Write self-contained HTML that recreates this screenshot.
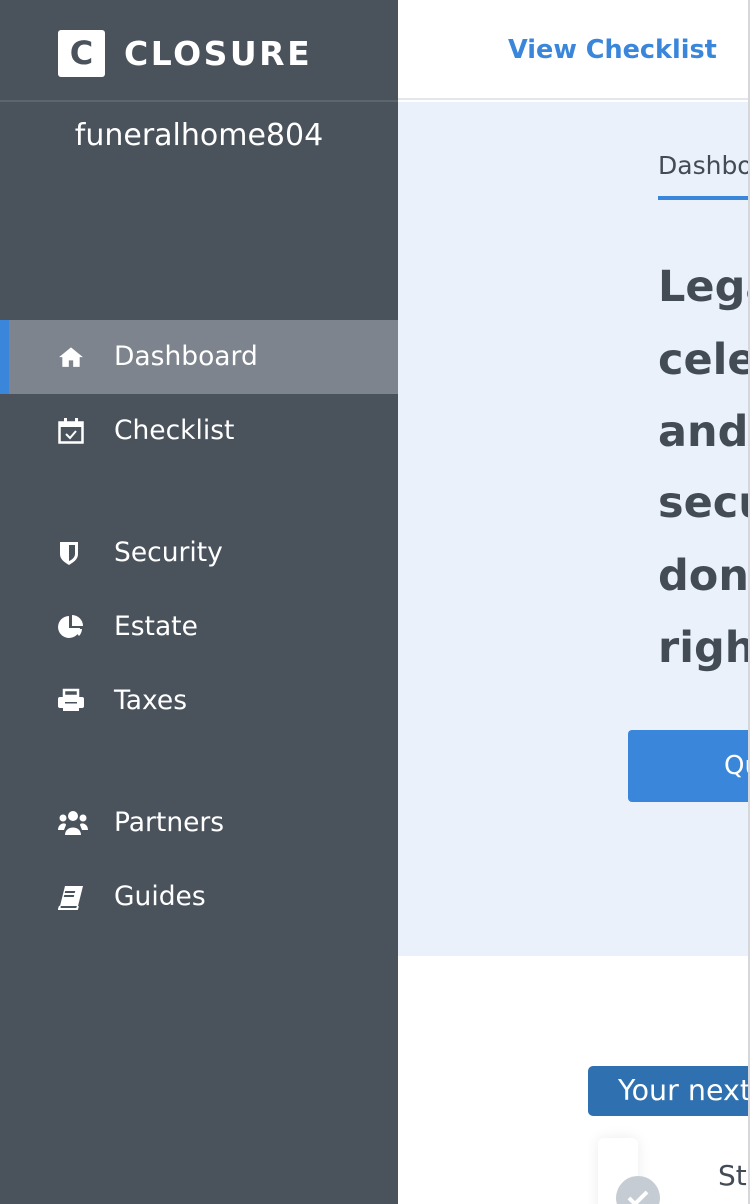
<!DOCTYPE html>
<html><head><meta charset="utf-8"><style>
*{margin:0;padding:0;box-sizing:border-box}
body{width:752px;height:1204px;overflow:hidden;background:#fff;font-family:"DejaVu Sans","Liberation Sans",sans-serif;position:relative}
.sb{position:absolute;left:0;top:0;width:398px;height:1204px;background:#4a525c}
.abs{position:absolute}
.nav{position:absolute;left:0;width:398px;height:74px;color:#fff;font-size:26.5px;line-height:74px}
.nav span{position:absolute;left:114px}
.nav svg{position:absolute;left:58px;top:24px}
.main{position:absolute;left:398px;top:0;width:350px;height:1204px;overflow:hidden}
.h{position:absolute;left:260px;font-weight:bold;font-size:43px;color:#434b55;white-space:nowrap;line-height:72px}
</style></head><body>
<div class="sb">
  <div class="abs" style="left:58px;top:30px;width:47px;height:47px;background:#fff;border-radius:3px"></div>
  <div class="abs" style="left:58px;top:30px;width:47px;height:47px;color:#4a525c;font-weight:bold;font-size:32px;line-height:47px;text-align:center">C</div>
  <div class="abs" style="left:124px;top:30px;height:47px;line-height:47px;color:#fff;font-weight:bold;font-size:33px;letter-spacing:2.5px">CLOSURE</div>
  <div class="abs" style="left:0;top:100px;width:398px;height:2px;background:#5c646e"></div>
  <div class="abs" style="left:0;top:116px;width:398px;text-align:center;color:#fff;font-size:30px;line-height:40px">funeralhome804</div>
  <div class="nav" style="top:320px;background:#7d848d"><div class="abs" style="left:0;top:0;width:9px;height:74px;background:#3a86db"></div>
    <svg width="26" height="24" viewBox="0 0 24 22"><path d="M12 3 L1 12 L4 12 L4 21 L10 21 L10 15 L14 15 L14 21 L20 21 L20 12 L23 12 Z" fill="#fff"/></svg><span>Dashboard</span></div>
  <div class="nav" style="top:394px"><svg width="26" height="26" viewBox="0 0 26 26"><rect x="1.5" y="4.5" width="23" height="20" fill="none" stroke="#fff" stroke-width="2.5"/><rect x="1" y="4" width="24" height="5" fill="#fff"/><rect x="6" y="0" width="3" height="7" fill="#fff"/><rect x="17" y="0" width="3" height="7" fill="#fff"/><path d="M8 16 L12 20 L18 13" fill="none" stroke="#fff" stroke-width="2"/></svg><span>Checklist</span></div>
  <div class="nav" style="top:516px"><svg width="24" height="26" viewBox="0 0 24 26"><path d="M2 2 H20 V14 C20 20 14 23 11 25 C8 23 2 20 2 14 Z" fill="#fff"/><path d="M11 5 H17 V14 C17 17 14 20 11 21 Z" fill="#4a525c"/></svg><span>Security</span></div>
  <div class="nav" style="top:590px"><svg width="26" height="26" viewBox="0 0 26 26"><path d="M11 2 A11 11 0 1 0 22 14 L11 14 Z" fill="#fff"/><path d="M14 1 A11 11 0 0 1 25 12 L14 12 Z" fill="#fff"/><path d="M15 15 L24 15 A11 11 0 0 1 21 22 Z" fill="#fff"/></svg><span>Estate</span></div>
  <div class="nav" style="top:664px"><svg width="26" height="24" viewBox="0 0 26 24"><path d="M6 2 H20 V8 H6 Z" fill="none" stroke="#fff" stroke-width="2.5"/><rect x="0" y="9" width="26" height="11" rx="2" fill="#fff"/><rect x="5" y="15" width="16" height="8" fill="#fff"/><rect x="7" y="14" width="12" height="1.5" fill="#4a525c"/></svg><span>Taxes</span></div>
  <div class="nav" style="top:786px"><svg width="30" height="26" viewBox="0 0 30 26"><circle cx="15" cy="6" r="5" fill="#fff"/><circle cx="5" cy="8" r="3.5" fill="#fff"/><circle cx="25" cy="8" r="3.5" fill="#fff"/><path d="M7 25 C7 15 23 15 23 25 Z" fill="#fff"/><path d="M0 20 C0 13 8 12 8 15 L6 20 Z M30 20 C30 13 22 12 22 15 L24 20 Z" fill="#fff"/></svg><span>Partners</span></div>
  <div class="nav" style="top:860px"><svg width="26" height="26" viewBox="0 0 26 26"><path d="M7 2 H25 L20 22 H2 Z" fill="#fff"/><path d="M2 22 L1 25 H19 L20 22" fill="none" stroke="#fff" stroke-width="2"/><rect x="9" y="7" width="10" height="2" fill="#4a525c" transform="skewX(-14)"/><rect x="9" y="11" width="10" height="2" fill="#4a525c" transform="skewX(-14)"/></svg><span>Guides</span></div>
</div>
<div class="main">
  <div class="abs" style="left:0;top:0;width:350px;height:100px;background:#fff;border-bottom:2px solid #e3e6ea"></div>
  <div class="abs" style="left:110px;top:28px;color:#3a86db;font-weight:bold;font-size:25.5px;line-height:44px;white-space:nowrap">View Checklist</div>
  <div class="abs" style="left:0;top:102px;width:350px;height:854px;background:#eaf1fb"></div>
  <div class="abs" style="left:260px;top:148px;color:#434b55;font-size:25px;line-height:36px;white-space:nowrap">Dashboard</div>
  <div class="abs" style="left:260px;top:196px;width:100px;height:4px;background:#3a86db"></div>
  <div class="h" style="top:251px">Legal</div>
  <div class="h" style="top:324px">celebrate</div>
  <div class="h" style="top:396px">and</div>
  <div class="h" style="top:467px">secure</div>
  <div class="h" style="top:540px">donate</div>
  <div class="h" style="top:612px">right</div>
  <div class="abs" style="left:230px;top:730px;width:200px;height:72px;background:#3a86db;border-radius:4px"></div>
  <div class="abs" style="left:326px;top:730px;color:#fff;font-size:26px;line-height:72px;white-space:nowrap">Quick</div>
  <div class="abs" style="left:190px;top:1066px;width:200px;height:50px;background:#2f71b0;border-radius:5px"></div>
  <div class="abs" style="left:220px;top:1066px;color:#fff;font-size:28.5px;line-height:50px;white-space:nowrap">Your next</div>
  <div class="abs" style="left:200px;top:1138px;width:40px;height:80px;background:#fff;border-radius:6px;box-shadow:0 0 14px rgba(0,0,0,0.08)"></div>
  <div class="abs" style="left:218px;top:1176px;width:44px;height:44px;border-radius:50%;background:#c6ccd4"></div>
  <svg class="abs" style="left:228px;top:1188px" width="24" height="20" viewBox="0 0 24 20"><path d="M3 10 L9 16 L21 4" fill="none" stroke="#fff" stroke-width="4"/></svg>
  <div class="abs" style="left:320px;top:1156px;color:#434b55;font-size:28px;line-height:40px;white-space:nowrap">Start</div>
</div>
<div class="abs" style="left:748px;top:0;width:2px;height:1204px;background:#d5d7da"></div>
</body></html>
